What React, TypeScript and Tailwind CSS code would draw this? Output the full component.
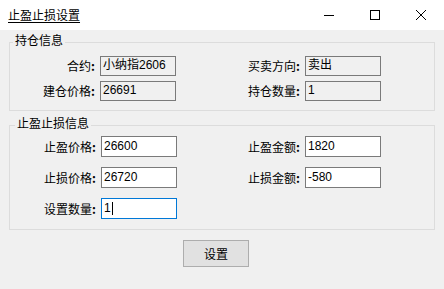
const cjk = "font-['Noto_Sans_CJK_SC',sans-serif]";
const num = "font-['Liberation_Sans','Noto_Sans_CJK_SC',sans-serif]";

type Field = { label: string; value: string; readOnly?: boolean; focused?: boolean };

function Box({ f, h }: { f: Field; h: number }) {
  const border = f.focused ? "border-[#0078d7]" : "border-[#7a7a7a]";
  const bg = f.readOnly ? "bg-[#f0f0f0]" : "bg-white";
  return (
    <div
      className={`flex w-[76px] border ${border} ${bg} px-[2px] text-[12px] text-black ${num} ${
        f.readOnly ? "items-start pt-[1px]" : "items-center"
      }`}
      style={{ height: h }}
    >
      <span className="leading-[15px]">{f.value}</span>
      {f.focused && <span className="ml-[1px] h-[13px] w-px bg-black" />}
    </div>
  );
}

function Row({ left, right, h, leftW }: { left: Field; right?: Field; h: number; leftW: number }) {
  return (
    <div className="flex items-center">
      <div className={`pr-[2px] text-right text-[12px] leading-[16px] text-black ${cjk}`} style={{ width: leftW }}>
        {left.label}<span className="font-bold">:</span>
      </div>
      <div className="ml-[3px]">
        <Box f={left} h={h} />
      </div>
      {right && (
        <>
          <div
            className={`pr-[2px] text-right text-[12px] leading-[16px] text-black ${cjk}`}
            style={{ width: 126 - (leftW - 87) }}
          >
            {right.label}<span className="font-bold">:</span>
          </div>
          <div className="ml-[3px]">
            <Box f={right} h={h} />
          </div>
        </>
      )}
    </div>
  );
}

function WinIcon({ kind }: { kind: "min" | "max" | "close" }) {
  return (
    <div className="flex h-[29px] w-[46px] items-center justify-center">
      <svg width="10" height="10" viewBox="0 0 10 10" fill="none" stroke="#000" strokeWidth="1" shapeRendering="crispEdges">
        {kind === "min" && <path d="M0 5.5H10" />}
        {kind === "max" && <rect x="0.5" y="0.5" width="9" height="9" />}
        {kind === "close" && <path d="M0 0L10 10M10 0L0 10" shapeRendering="geometricPrecision" />}
      </svg>
    </div>
  );
}

export default function App() {
  return (
    <div className="flex h-[289px] w-[444px] flex-col overflow-hidden bg-[#f0f0f0]">
      <div className="flex h-[30px] items-center bg-white">
        <span className={`ml-[8px] text-[12px] leading-[16px] text-black underline underline-offset-[2px] ${cjk}`}>
          止盈止损设置
        </span>
        <div className="ml-auto flex">
          <WinIcon kind="min" />
          <WinIcon kind="max" />
          <WinIcon kind="close" />
        </div>
      </div>

      <fieldset className="mx-[9px] mt-[2px] border border-[#dcdcdc] px-0 pb-[9px] pt-[4px]">
        <legend className={`ml-[3px] px-[2px] pb-[4px] text-[12px] leading-[16px] text-black ${cjk}`}>持仓信息</legend>
        <div className="flex flex-col gap-[5px]">
          <Row
            h={20}
            leftW={87}
            left={{ label: "合约", value: "小纳指2606", readOnly: true }}
            right={{ label: "买卖方向", value: "卖出", readOnly: true }}
          />
          <Row
            h={20}
            leftW={87}
            left={{ label: "建仓价格", value: "26691", readOnly: true }}
            right={{ label: "持仓数量", value: "1", readOnly: true }}
          />
        </div>
      </fieldset>

      <fieldset className="mx-[9px] mt-[4px] border border-[#dcdcdc] px-0 pb-[10px] pt-[1px]">
        <legend className={`ml-[5px] px-[2px] pb-[4px] text-[12px] leading-[16px] text-black ${cjk}`}>止盈止损信息</legend>
        <div className="flex flex-col gap-[10px]">
          <Row
            h={21}
            leftW={88}
            left={{ label: "止盈价格", value: "26600" }}
            right={{ label: "止盈金额", value: "1820" }}
          />
          <Row
            h={21}
            leftW={88}
            left={{ label: "止损价格", value: "26720" }}
            right={{ label: "止损金额", value: "-580" }}
          />
          <Row h={21} leftW={88} left={{ label: "设置数量", value: "1", focused: true }} />
        </div>
      </fieldset>

      <div className="mt-[10px] flex">
        <button
          className={`ml-[183px] h-[27px] w-[66px] border border-[#adadad] bg-[#e1e1e1] text-[12px] text-black ${cjk}`}
        >
          设置
        </button>
      </div>
    </div>
  );
}
